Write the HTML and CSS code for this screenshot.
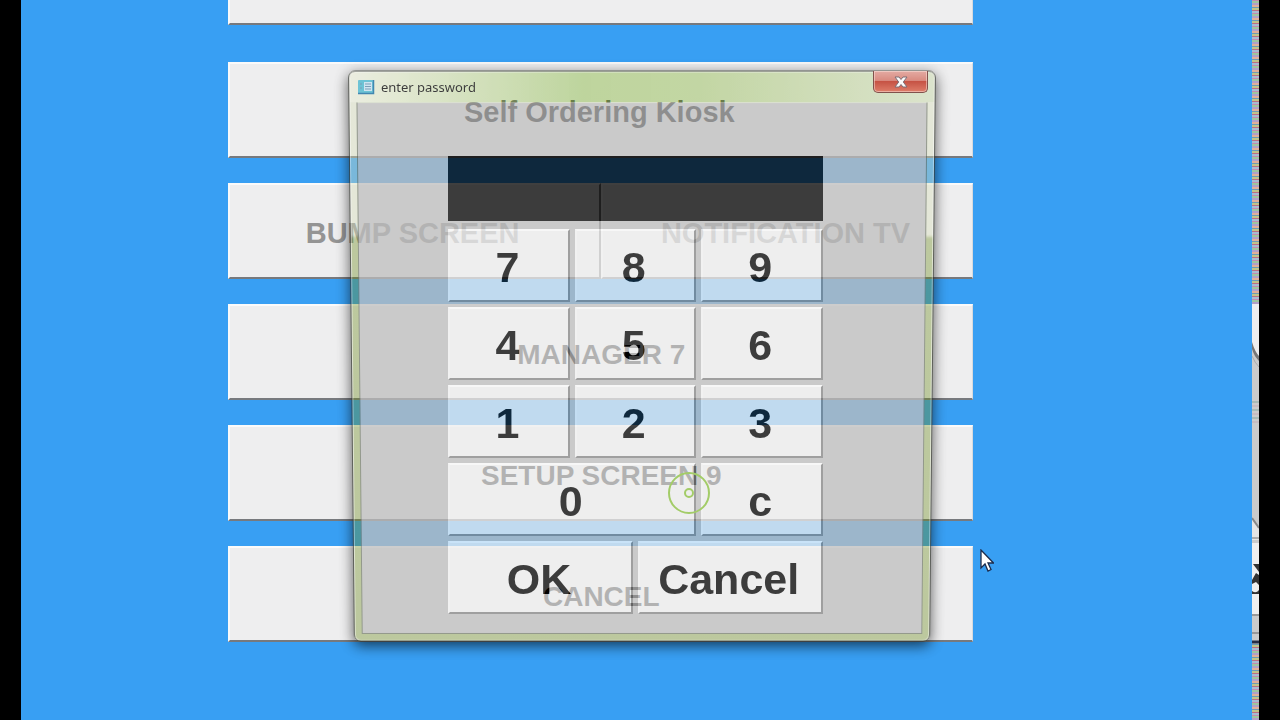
FILE: index.html
```html
<!DOCTYPE html>
<html lang="en">
<head>
<meta charset="utf-8">
<title>enter password</title>
<link rel="stylesheet" href="styles.css">
</head>
<body>
<div class="screen">
  <main class="stage">
    <nav class="menu" aria-label="Kiosk menu">
      <button class="menu-item menu-item-cut" type="button" aria-label="Previous option"></button>
      <button class="menu-item menu-item-large" type="button">Self Ordering Kiosk</button>
      <div class="menu-pair">
        <button class="menu-item menu-item-large" type="button" disabled>BUMP SCREEN</button>
        <button class="menu-item menu-item-large" type="button" disabled>NOTIFICATION TV</button>
      </div>
      <button class="menu-item" type="button">MANAGER 7</button>
      <button class="menu-item" type="button">SETUP SCREEN 9</button>
      <button class="menu-item" type="button">CANCEL</button>
    </nav>

    <section class="dialog" role="dialog" aria-labelledby="dialog-title">
      <div class="frame"><div class="frame-client"></div></div>
      <header class="titlebar">
        <svg class="app-icon" width="18" height="16" viewBox="0 0 18 16" aria-hidden="true">
          <rect x="1" y="1" width="16" height="14" rx="1" fill="#42b4cc"/>
          <path d="M1 14.500h15.500V1" fill="none" stroke="#08649c" stroke-width="1.500"/>
          <rect x="7" y="3" width="8" height="9" fill="#c5e2f2"/>
          <path d="M3 5h2M3 9h2M8 5h6M8 7.500h6M8 10h6" stroke="#5685a5" stroke-width="1"/>
        </svg>
        <h1 class="title" id="dialog-title">enter password</h1>
        <button class="close" type="button" aria-label="Close">
          <svg width="14" height="12" viewBox="0 0 14 12" aria-hidden="true">
            <path d="M1 1h4l2 2.500L9 1h4L9.300 6 13 11H9L7 8.500 5 11H1l3.700-5z" fill="#fff" stroke="#57434d" stroke-width="1"/>
          </svg>
        </button>
      </header>
      <form class="keypad">
        <input class="display" type="password" aria-label="Password">
        <button class="key" type="button">7</button>
        <button class="key" type="button">8</button>
        <button class="key" type="button">9</button>
        <button class="key" type="button">4</button>
        <button class="key" type="button">5</button>
        <button class="key" type="button">6</button>
        <button class="key" type="button">1</button>
        <button class="key" type="button">2</button>
        <button class="key" type="button">3</button>
        <button class="key key-zero" type="button">0</button>
        <button class="key" type="button">c</button>
        <button class="key key-half" type="button">OK</button>
        <button class="key key-half" type="button">Cancel</button>
      </form>
    </section>

    <svg class="touch" width="44" height="44" viewBox="0 0 44 44" aria-hidden="true">
      <circle cx="22" cy="22" r="20" fill="none" stroke="#a3cc68" stroke-width="2"/>
      <circle cx="22" cy="22" r="4" fill="none" stroke="#a3cc68" stroke-width="2"/>
    </svg>
    <svg class="pointer" width="14" height="23" viewBox="0 0 14 23" aria-hidden="true">
      <path d="M1 1v18l4-4 3 7 3-1.500-3-6.500h5.500z" fill="#fff" stroke="#1c2c4c" stroke-width="1.300"/>
    </svg>
  </main>
  <aside class="edge" aria-hidden="true">
    <svg class="edge-art" width="7" height="340" viewBox="0 0 7 340">
      <rect width="7" height="340" fill="#cbcbcb"/>
      <path d="M0 0h7v54L0 42z" fill="#eeeeef"/>
      <path d="M0 38q3 10 7 14v5Q2 52 0 45z" fill="#777"/>
      <path d="M0 52q3 7 7 11" fill="none" stroke="#aaa"/>
      <path d="M0 98h7M0 106h7M0 114h7" stroke="#a9bab5" stroke-width="2"/>
      <path d="M0 102h7M0 110h7M0 118h7" stroke="#c3adb5"/>
      <path d="M0 214l7 10v12H0z" fill="#e5e5e5"/>
      <path d="M0 214l7 10" stroke="#888" stroke-width="2"/>
      <path d="M0 234h7" stroke="#777"/>
      <rect y="239" width="7" height="71" fill="#efefef"/>
      <path d="M1 260h6v8zM0 276l4-7 3 2v10l-3-3-4 2zM0 287q4 3 7-1v4H0z" fill="#333"/>
      <path d="M0 311h7M0 329h7" stroke="#999" stroke-width="2"/>
      <path d="M0 338h7" stroke="#262d46" stroke-width="3"/>
    </svg>
  </aside>
</div>
</body>
</html>
```
FILE: styles.css
```css
* {
  box-sizing: border-box;
}

body {
  margin: 0;
  background: #000;
  font-family: "Liberation Sans", Arial, sans-serif;
}

button,
input {
  margin: 0;
  padding: 0;
  font: inherit;
}

.screen {
  display: flex;
  min-height: 100vh;
  padding: 0 21px;
  overflow: hidden;
}

.stage {
  position: relative;
  flex: 1;
  background: #389ff3;
}

/* Menu behind the dialog */
.menu {
  display: flex;
  flex-direction: column;
  gap: 25px;
  width: 60.500%;
  margin-left: 16.850%;
}

.menu-item {
  min-height: 96px;
  padding-top: 5px;
  border: 2px solid;
  border-color: #fafafa #d8dadd #77797d #fafafa;
  border-width: 2px 1px 2px 2px;
  border-radius: 0;
  background: #eeeeef;
  color: #000;
  font-size: 28px;
  font-weight: bold;
}

.menu-item-large {
  padding-right: 4px;
  font-size: 29px;
}

.menu-item-cut {
  min-height: 25px;
  margin-bottom: 12px;
  border-top: 0;
}

.menu-pair {
  display: grid;
  grid-template-columns: 1fr 1fr;
}

.menu-item:disabled {
  color: #949494;
}

.menu-pair .menu-item:first-child {
  border-right: 2px solid #777;
}

/* Password dialog */
.dialog {
  position: absolute;
  top: 70px;
  left: 26.800%;
  width: 47.300%;
  height: 571px;
  opacity: 0.75;
}

.frame {
  position: absolute;
  inset: 3px 0 -4px;
  padding: 30px 7px 7px;
  border: 1px solid #2c2f28;
  border-radius: 7px;
  background:
    linear-gradient(90deg, rgba(240, 242, 225, 0.6), rgba(145, 190, 88, 0.65) 40%, rgba(150, 190, 90, 0.6) 60%, rgba(205, 220, 180, 0.6)) top / 100% 30px no-repeat,
    linear-gradient(rgba(215, 222, 185, 0.55) 161px, rgba(108, 140, 25, 0.5) 165px);
  box-shadow: inset 0 0 0 1px rgba(255, 255, 255, 0.55), 0 4px 14px rgba(0, 0, 0, 0.85);
  transform: perspective(1500px) rotateX(-3deg);
}

.frame-client {
  height: 100%;
  border: 1px solid #737b6a;
  border-top-color: #d5dcc8;
  background: #bebebe;
}

.titlebar {
  position: relative;
  display: flex;
  align-items: center;
  gap: 6px;
  height: 33px;
  padding: 1px 5px 0 6px;
}

.title {
  flex: 1;
  margin: 0;
  color: #000;
  font: 13px "Noto Sans", sans-serif;
}

.close {
  display: flex;
  align-items: center;
  justify-content: center;
  align-self: flex-start;
  width: 55px;
  height: 22px;
  border: 1px solid #5d1c16;
  border-top: 0;
  border-radius: 0 0 5px 5px;
  background: linear-gradient(#e0948a, #d26a5c 45%, #b81f0c 50%, #d9583e);
  box-shadow: inset 0 0 0 1px rgba(255, 225, 215, 0.5);
}

.keypad {
  position: relative;
  display: grid;
  grid-template-columns: repeat(6, 1fr);
  grid-template-rows: 68px;
  grid-auto-rows: 73px;
  gap: 5px;
  width: 64.300%;
  margin: 53px 0 0 16.700%;
}

.display {
  grid-column: 1 / -1;
  width: 100%;
  height: 65px;
  border: 0;
  border-radius: 0;
  background: #000;
  color: #fff;
  font-size: 43px;
}

.key {
  grid-column: span 2;
  padding: 2px 3px 0 0;
  border: 2px solid;
  border-color: #fafafa #858585 #858585 #f2f2f2;
  border-radius: 0;
  background: #eeeeee;
  color: #000;
  font-size: 43px;
  font-weight: bold;
  line-height: 48px;
}

.key-zero {
  grid-column: span 4;
}

.key-half {
  grid-column: span 3;
}

/* Pointers */
.touch {
  position: absolute;
  top: 471px;
  left: 52.500%;
}

.pointer {
  position: absolute;
  top: 549px;
  left: 77.900%;
}

/* Sliver of the neighbouring screen */
.edge {
  width: 7px;
  padding-top: 304px;
  background: repeating-linear-gradient(
    #c58bb0 0 1px, #9fc6a0 1px 3px, #b2a0c8 3px 5px, #e0b09a 5px 7px,
    #6f9cb5 7px 8px, #c2c489 8px 10px, #bd6f86 10px 11px, #a8bcd0 11px 13px);
}

.edge-art {
  display: block;
}
```
